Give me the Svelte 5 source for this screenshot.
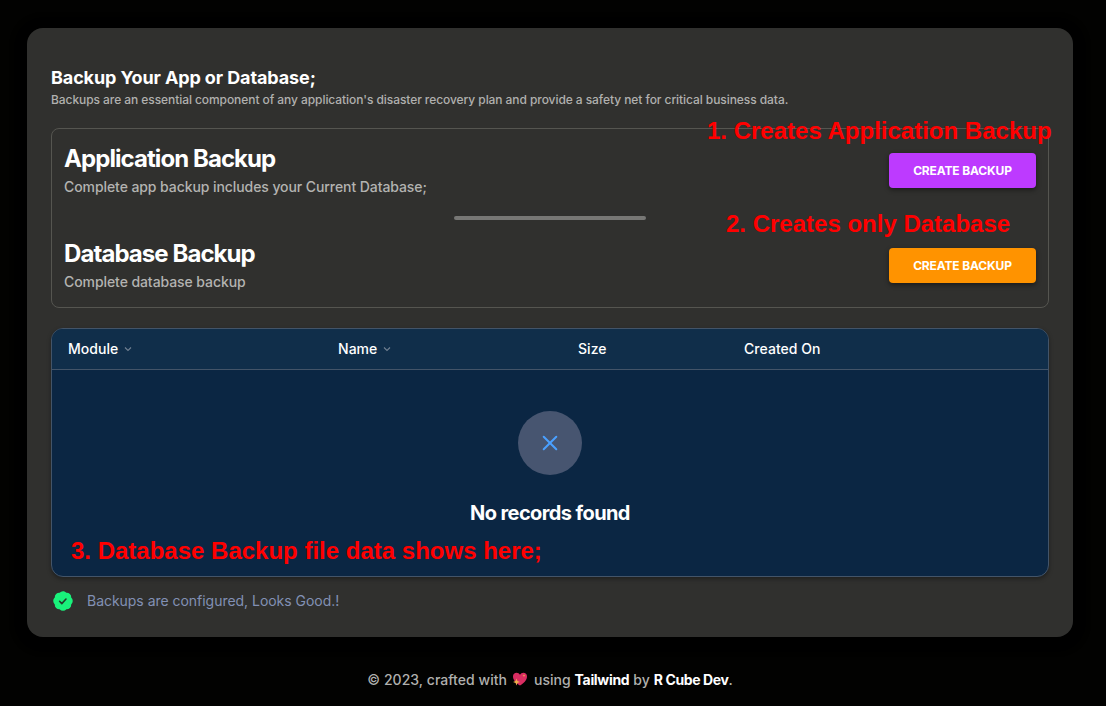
<script>
  const backups = [
    { title: 'Application Backup', text: 'Complete app backup includes your Current Database;', tone: 'purple' },
    { title: 'Database Backup', text: 'Complete database backup', tone: 'orange' }
  ];
  const columns = [
    { label: 'Module', sortable: true },
    { label: 'Name', sortable: true },
    { label: 'Size', sortable: false },
    { label: 'Created On', sortable: false }
  ];
</script>

<main class="page">
  <section class="card">
    <header>
      <h1>Backup Your App or Database;</h1>
      <p class="lead">Backups are an essential component of any application's disaster recovery plan and provide a safety net for critical business data.</p>
    </header>

    <div class="options">
      {#each backups as item, i}
        {#if i > 0}<div class="divider"></div>{/if}
        <div class="option">
          <div>
            <h2>{item.title}</h2>
            <p>{item.text}</p>
          </div>
          <button class={item.tone}>CREATE BACKUP</button>
        </div>
      {/each}
    </div>

    <div class="table">
      <div class="thead">
        {#each columns as col}
          <div class="th">
            <span>{col.label}</span>
            {#if col.sortable}
              <svg width="8" height="8" viewBox="0 0 8 8" fill="none" stroke="#718091" stroke-width="1.1"><path d="M1 2.5 4 5.5 7 2.5" /></svg>
            {/if}
          </div>
        {/each}
      </div>
      <div class="empty">
        <div class="circle">
          <svg width="24" height="24" viewBox="0 0 24 24" fill="none" stroke="#4aa0ff" stroke-width="2" stroke-linecap="round"><path d="M5.700 5.700l12.600 12.600M18.300 5.700l-12.600 12.600" /></svg>
        </div>
        <h3>No records found</h3>
      </div>
    </div>

    <div class="status">
      <svg width="24" height="24" viewBox="0 0 24 24"><path fill="#19f27b" fill-rule="evenodd" d="M8.603 3.799A4.490 4.490 0 0 1 12 2.250c1.357 0 2.573.600 3.397 1.549a4.490 4.490 0 0 1 3.498 1.307 4.491 4.491 0 0 1 1.307 3.497A4.490 4.490 0 0 1 21.750 12a4.490 4.490 0 0 1-1.549 3.397 4.491 4.491 0 0 1-1.307 3.497 4.491 4.491 0 0 1-3.497 1.307A4.490 4.490 0 0 1 12 21.750a4.490 4.490 0 0 1-3.397-1.549 4.490 4.490 0 0 1-3.498-1.306 4.491 4.491 0 0 1-1.307-3.498A4.490 4.490 0 0 1 2.250 12c0-1.357.600-2.573 1.549-3.397a4.490 4.490 0 0 1 1.307-3.497 4.490 4.490 0 0 1 3.497-1.307Z" /><path d="M8.600 12.300l2.200 2.300 4.200-4.600" fill="none" stroke="#233a2b" stroke-width="1.600" stroke-linecap="round" stroke-linejoin="round" /></svg>
      <span>Backups are configured, Looks Good.!</span>
    </div>
  </section>

  <footer>
    <span class="crafted">© 2023, crafted with</span>
    <svg class="heart" width="16" height="16" viewBox="0 0 16 16">
      <path fill="#d92d62" d="M8 14.500C4.500 12.300 1 9.300 1 5.400 1 3 2.600 1.700 4.600 1.700c1.500 0 2.700.800 3.400 2.100.700-1.300 1.900-2.100 3.400-2.100 2 0 3.600 1.300 3.600 3.700 0 3.900-3.500 6.900-7 9.100Z" />
      <path fill="#eeb04c" d="M4.500 7.500l.9 2.600L8 11l-2.600.9-.9 2.600-.9-2.600L1 11l2.600-.9ZM12 3.200l.400 1.100 1.100.400-1.100.400-.400 1.100-.400-1.100-1.100-.400 1.100-.400Z" />
    </svg>
    <span class="using">using</span>
    <b class="tailwind">Tailwind</b>
    <span class="by">by</span>
    <b class="dev">R Cube Dev</b><span class="stop">.</span>
  </footer>

  <div class="note first">1. Creates Application Backup</div>
  <div class="note second">2. Creates only Database</div>
  <div class="note third">3. Database Backup file data shows here;</div>
</main>

<style>
  :global(body) { margin: 0; background: #020201; }
  .page {
    position: relative;
    box-sizing: border-box;
    width: 1106px;
    height: 706px;
    padding: 28px 33px 0 27px;
    overflow: hidden;
    background: #020201;
    font-family: Inter, "Liberation Sans", sans-serif;
    white-space: nowrap;
  }
  h1, h2, h3, p { margin: 0; }
  svg { display: block; flex: none; }
  .card {
    box-sizing: border-box;
    height: 609px;
    padding: 38px 24px 0;
    border-radius: 16px;
    background: #30302e;
    box-shadow: 0 2px 4px 13px #000;
  }
  header { height: 62px; }
  h1 { color: #fff; font-size: 18px; line-height: 24px; font-weight: 700; letter-spacing: -.11px; }
  .lead { color: #b0b0af; font-size: 12px; line-height: 20px; font-weight: 450; letter-spacing: -.07px; }
  .options {
    box-sizing: border-box;
    height: 180px;
    padding: 12px;
    border: 1px solid #555550;
    border-radius: 8px;
  }
  .option { display: flex; justify-content: space-between; height: 60px; }
  .option p { color: #b3b3b1; font-size: 14px; line-height: 20px; margin-top: 1px; font-weight: 450; letter-spacing: -.08px; }
  h2 { padding-top: 1px; color: #fff; font-size: 24px; line-height: 34px; font-weight: 700; letter-spacing: -.93px; }
  .divider { width: 192px; height: 4px; margin: 15px auto 16px; border-radius: 2px; background: #777775; }
  button {
    width: 147px;
    height: 35px;
    margin: 12px 0 0;
    padding: 0;
    border: 0;
    border-radius: 4px;
    color: #fff;
    font: 700 12px/35px Inter, sans-serif;
    letter-spacing: -.14px;
    box-shadow: 0 2px 5px rgba(0, 0, 0, .45);
  }
  button.purple { background: #bd3aff; }
  button.orange { background: #ff9300; }
  .table {
    box-sizing: border-box;
    height: 249px;
    margin-top: 20px;
    overflow: hidden;
    border: 1px solid #435468;
    border-radius: 12px;
    background: #0b2643;
    box-shadow: 0 2px 4px rgba(0, 0, 0, .35);
  }
  .thead {
    display: grid;
    grid-template-columns: 270px 240px 166px 1fr;
    box-sizing: border-box;
    height: 41px;
    padding: 0 0 1px 16px;
    border-bottom: 1px solid #435468;
    background: #102e4a;
  }
  .th { display: flex; align-items: center; gap: 6px; color: #fff; font-size: 14px; line-height: 17px; font-weight: 550; letter-spacing: .04px; }
  .empty { display: flex; flex-direction: column; align-items: center; padding-top: 41px; }
  .circle { display: grid; place-items: center; width: 64px; height: 64px; border-radius: 50%; background: #475570; }
  h3 { margin-top: 24px; color: #fff; font-size: 20px; line-height: 28px; font-weight: 700; letter-spacing: -.6px; }
  .status { display: flex; align-items: center; gap: 12px; margin-top: 12px; color: #8290b4; font-size: 14px; line-height: 24px; letter-spacing: -.03px; }
  footer { display: flex; justify-content: center; align-items: center; height: 20px; margin-top: 32px; color: #b0b0ae; font-size: 14px; font-weight: 450; }
  footer b { color: #fff; font-weight: 700; }
  .crafted { letter-spacing: .04px; }
  .heart { margin: 0 6px 0 5px; }
  .tailwind, .by, .dev { margin-left: 4px; }
  .tailwind { letter-spacing: -.32px; }
  .dev { letter-spacing: -.4px; }
  .note { position: absolute; color: #f00; font: bold 24px/28px "Liberation Sans", sans-serif; }
  .first { left: 707px; top: 117px; }
  .second { left: 726px; top: 210px; }
  .third { left: 71px; top: 537px; }
</style>
